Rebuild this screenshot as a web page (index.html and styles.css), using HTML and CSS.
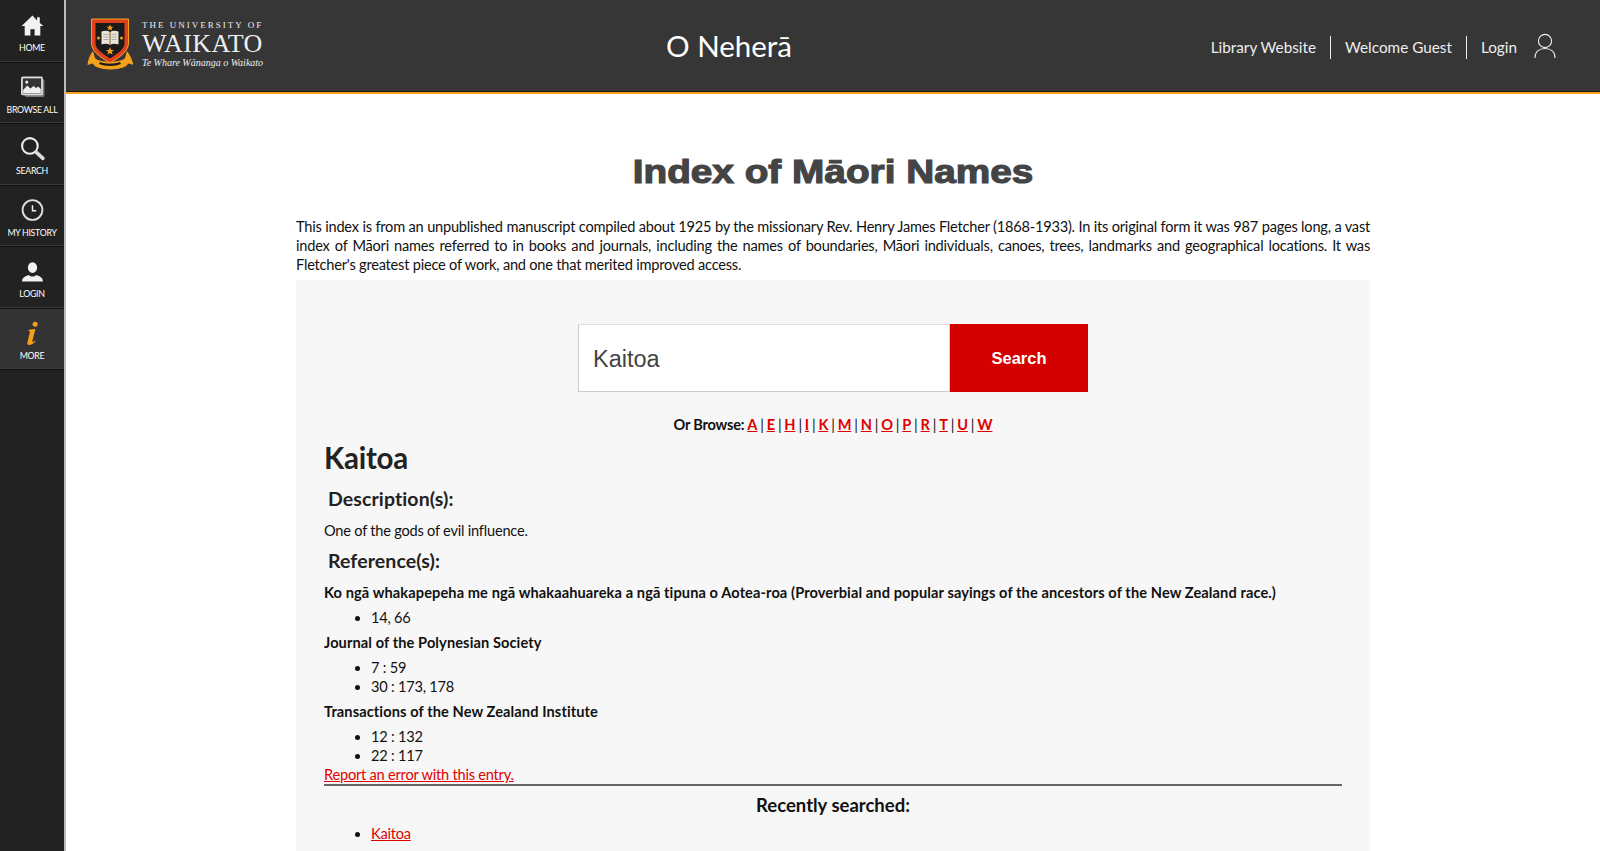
FILE: index.html
```html
<!DOCTYPE html>
<html lang="en">
<head>
  <meta charset="UTF-8">
  <meta name="viewport" content="width=device-width, initial-scale=1.0">
  <title>Index of Māori Names</title>
  <link rel="stylesheet" href="styles.css">
</head>
<body>
  <div class="app">
    <nav class="sidebar">
      <a class="side-item" href="#">
        <svg class="side-icon" viewBox="0 0 24 24"><path fill="#f2f2f2" d="M12 2.500 1.500 12.500h3v9h5.500v-6h4v6h5.500v-9h3L19 9.600V4h-2.600v3.100z"/></svg>
        <span>HOME</span>
      </a>
      <a class="side-item" href="#">
        <svg class="side-icon" viewBox="0 0 24 24"><rect x="4.500" y="4" width="19" height="17" rx="1.500" fill="#777"/><rect x="1" y="1.500" width="21" height="18" rx="1.500" fill="#ddd"/><rect x="2.700" y="3.200" width="17.600" height="14.600" fill="#333"/><path fill="#eee" d="M3 17.500v-3l4-4.500 3 3 3-2.500 2.500 2 2-1.500 2.500 2.500v4z"/><circle cx="6.500" cy="6.800" r="1.500" fill="#eee"/></svg>
        <span>BROWSE ALL</span>
      </a>
      <a class="side-item" href="#">
        <svg class="side-icon" viewBox="0 0 24 24"><circle cx="9.500" cy="9.500" r="7.500" fill="none" stroke="#eee" stroke-width="2"/><path stroke="#ddd" stroke-width="3.400" stroke-linecap="round" d="m16 16 6 5.500"/></svg>
        <span>SEARCH</span>
      </a>
      <a class="side-item" href="#">
        <svg class="side-icon" viewBox="0 0 24 24"><circle cx="12" cy="11.500" r="9.500" fill="none" stroke="#ddd" stroke-width="1.800"/><path fill="none" stroke="#eee" stroke-width="1.400" d="M12 7v5.300h3.600"/></svg>
        <span>MY HISTORY</span>
      </a>
      <a class="side-item" href="#">
        <svg class="side-icon" viewBox="0 0 24 24"><ellipse cx="12" cy="8.200" rx="4.400" ry="5.200" fill="#f2f2f2"/><path fill="#f2f2f2" d="M2 21.500c0-4 3-5 6.500-6.200 2 2 5 2 7 0 3.500 1.200 6.500 2.200 6.500 6.200z"/></svg>
        <span>LOGIN</span>
      </a>
      <a class="side-item active" href="#">
        <svg class="side-icon" viewBox="0 0 24 24"><circle cx="14.500" cy="3" r="2.400" fill="#f5a11c"/><path fill="#f5a11c" d="M8.500 8.500 14.800 7.600 11.800 19.500c-.2.900.5 1 2.700-.8l.5.600c-2.300 3-4.300 3.700-6.200 3.700-1.500 0-2-1-1.600-2.500l2.300-9.700c.2-1-.3-1.100-1.700-1.100z"/></svg>
        <span>MORE</span>
      </a>
    </nav>

    <div class="page">
      <header class="topbar">
        <a class="logo" href="#">
          <svg class="crest" viewBox="0 0 46 54">
            <path fill="#f5a11c" d="M6 33c-3 4-5 8-5.500 14l5-1.500 3 3c8 4 22 4 30 0l3-3 5 1.500C45 41 43 37 40 33l-2 7c-4 5-26 5-30 0z"/>
            <path fill="#1b1b1b" d="M12 46c6 2.500 16 2.500 22 0l-1-2c-6 2-14 2-20 0z"/>
            <path fill="#e0401c" stroke="#f5a11c" d="M4.500 1h37v24c0 8-8 14-18.500 20C12.500 39 4.500 33 4.500 25z"/>
            <path fill="#1b1b1b" d="M8.500 5h29v20c0 6-6 10-14.500 15.500C14.500 35 8.500 31 8.500 25z"/>
            <path fill="#e9e4d6" d="M14.500 13.500c3-1 6-1 8.500.5 2.500-1.500 5.500-1.500 8.500-.5v13c-3-1-6-1-8.500.5-2.500-1.500-5.500-1.500-8.500-.5z"/>
            <path fill="none" stroke="#9a9a9a" stroke-width=".7" d="M16.500 16.500h5M16.500 19h5M16.500 21.500h5M24.500 16.500h5M24.500 19h5M24.500 21.500h5"/>
            <path stroke="#8a5a2b" d="M23 14v13"/>
            <path fill="#f5a11c" d="m23 6.500 1 2.300h2.400l-1.900 1.500.7 2.300-2.200-1.400-2.200 1.400.7-2.300-1.900-1.500H22zM23 29l1.200 3h3l-2.400 1.800.9 3-2.700-1.800-2.700 1.800.9-3-2.400-1.800h3z"/>
            <circle cx="11.500" cy="20" r="1.500" fill="#f5a11c"/>
            <circle cx="34.500" cy="20" r="1.500" fill="#f5a11c"/>
          </svg>
          <span class="logo-text">
            <span class="logo-top">THE UNIVERSITY OF</span>
            <span class="logo-name">WAIKATO</span>
            <span class="logo-sub">Te Whare Wānanga o Waikato</span>
          </span>
        </a>
        <div class="site-title">O Neherā</div>
        <div class="top-links">
          <a href="#">Library Website</a>
          <a href="#">Welcome Guest</a>
          <a href="#">Login</a>
          <svg class="user-icon" viewBox="0 0 24 26"><circle cx="12" cy="8" r="6.600" fill="none" stroke="#eee" stroke-width="1.100"/><path fill="none" stroke="#eee" stroke-width="1.100" d="M2 25c0-6 4-9.500 10-9.500S22 19 22 25"/></svg>
        </div>
      </header>

      <main class="content">
        <h1 class="page-title">Index of Māori Names</h1>
        <p class="intro">This index is from an unpublished manuscript compiled about 1925 by the missionary Rev. Henry James Fletcher (1868-1933). In its original form it was 987 pages long, a vast index of Māori names referred to in books and journals, including the names of boundaries, Māori individuals, canoes, trees, landmarks and geographical locations. It was Fletcher's greatest piece of work, and one that merited improved access.</p>

        <section class="panel">
          <form class="search-form">
            <input class="search-input" type="text" value="Kaitoa">
            <button class="search-btn" type="button">Search</button>
          </form>
          <p class="browse">
            <b>Or Browse:</b>
            <a href="#">A</a> | <a href="#">E</a> | <a href="#">H</a> | <a href="#">I</a> | <a href="#">K</a> | <a href="#">M</a> | <a href="#">N</a> | <a href="#">O</a> | <a href="#">P</a> | <a href="#">R</a> | <a href="#">T</a> | <a href="#">U</a> | <a href="#">W</a>
          </p>

          <h2 class="entry-name">Kaitoa</h2>
          <h3 class="entry-head">Description(s):</h3>
          <p class="entry-text">One of the gods of evil influence.</p>
          <h3 class="entry-head">Reference(s):</h3>
          <p class="ref-title">Ko ngā whakapepeha me ngā whakaahuareka a ngā tipuna o Aotea-roa (Proverbial and popular sayings of the ancestors of the New Zealand race.)</p>
          <ul class="ref-list">
            <li>14, 66</li>
          </ul>
          <p class="ref-title">Journal of the Polynesian Society</p>
          <ul class="ref-list">
            <li>7 : 59</li>
            <li>30 : 173, 178</li>
          </ul>
          <p class="ref-title">Transactions of the New Zealand Institute</p>
          <ul class="ref-list last">
            <li>12 : 132</li>
            <li>22 : 117</li>
          </ul>
          <a class="report" href="#">Report an error with this entry.</a>
          <hr class="divider">
          <h4 class="recent-head">Recently searched:</h4>
          <ul class="ref-list recent-list">
            <li><a href="#">Kaitoa</a></li>
          </ul>
        </section>
      </main>
    </div>
  </div>
</body>
</html>
```

FILE: styles.css
```css
* {
  box-sizing: border-box;
}

html, body {
  height: 100%;
  margin: 0;
  overflow: hidden;
}

body {
  font-family: Lato, Arial, sans-serif;
  font-size: 14.6px;
  line-height: 19px;
  letter-spacing: -0.22px;
  color: #111;
  background: #fff;
}

a {
  color: #e00000;
}

.app {
  display: flex;
  height: 100vh;
}

/* left nav */
.sidebar {
  width: 66px;
  flex: none;
  padding-top: 1px;
  background: #222;
  border-right: 2px solid #bbb;
}

.side-item {
  height: 61.5px;
  display: flex;
  flex-direction: column;
  align-items: center;
  padding-top: 12px;
  background: #222;
  border-bottom: 1px solid #111;
  box-shadow: inset 0 -1px 0 #3a3a3a;
  color: #fff;
  text-decoration: none;
  font-size: 8.800px;
  line-height: 12px;
  letter-spacing: -0.3px;
}

.side-item.active {
  background: #333;
}

.side-icon {
  width: 25px;
  height: 25px;
  margin-bottom: 4px;
}

.page {
  flex: 1;
  min-width: 0;
}

/* header */
.topbar {
  height: 94px;
  display: flex;
  align-items: center;
  position: relative;
  padding: 0 43px 3px 21px;
  background: #363636;
  border-bottom: 2px solid #f5a11c;
  box-shadow: inset 0 -1px 0 #1a1a1a;
  color: #fff;
  letter-spacing: 0;
}

.logo {
  display: flex;
  align-items: center;
  gap: 9px;
  color: #eee;
  text-decoration: none;
}

.crest {
  width: 46px;
  height: 54px;
}

.logo-text {
  display: flex;
  flex-direction: column;
  font-family: "Liberation Serif", serif;
}

.logo-top {
  font-size: 9px;
  line-height: 11px;
  letter-spacing: 2px;
}

.logo-name {
  font-size: 26px;
  line-height: 25px;
  letter-spacing: 0.4px;
}

.logo-sub {
  font-size: 10px;
  line-height: 13px;
  font-style: italic;
}

.site-title {
  position: absolute;
  left: 600px;
  top: 27px;
  font-size: 29.500px;
  line-height: 38px;
}

.top-links {
  margin-left: auto;
  margin-top: 6px;
  display: flex;
  align-items: center;
  font-size: 15.300px;
}

.top-links a {
  padding: 2px 14px;
  color: #eee;
  text-decoration: none;
  border-right: 1px solid #eee;
}

.top-links a:nth-child(3) {
  border-right: 0;
  padding-right: 16px;
}

.user-icon {
  width: 24px;
  height: 26px;
  margin-top: -4px;
}

/* main column */
.content {
  width: 1074px;
  margin-left: 230px;
}

.page-title {
  margin: 57px 0 26px;
  text-align: center;
  font-family: "Liberation Sans", Arial, sans-serif;
  font-size: 34px;
  line-height: 40px;
  letter-spacing: 0;
  color: #444;
  -webkit-text-stroke: 1.200px #444;
  transform: scaleX(1.140);
}

.intro {
  margin: 0 0 6px;
  text-align: justify;
}

.panel {
  background: #f7f7f7;
  padding: 44px 28px 40px;
}

.search-form {
  display: flex;
  width: 510px;
  height: 68px;
  margin: 0 auto 23px;
}

.search-input {
  flex: 1;
  min-width: 0;
  padding: 2px 14px 0;
  border: 1px solid #ccc;
  border-top-color: #ddd;
  background: #fff;
  font-family: "Liberation Sans", Arial, sans-serif;
  font-size: 23.500px;
  color: #444;
}

.search-btn {
  width: 138px;
  border: 0;
  background: #d40000;
  color: #fff;
  font-family: "Liberation Sans", Arial, sans-serif;
  font-size: 16.500px;
  font-weight: 700;
}

.browse {
  margin: 0 0 6px;
  text-align: center;
  word-spacing: -0.5px;
}

.browse b {
  word-spacing: 0;
}

.browse a {
  font-weight: 700;
}

.entry-name {
  margin: 0 0 11px;
  font-size: 29.500px;
  line-height: 36px;
  color: #222;
}

.entry-head {
  margin: 0 0 11px 4px;
  font-size: 19.500px;
  line-height: 23px;
  letter-spacing: 0.1px;
  color: #222;
}

.entry-text {
  margin: 0 0 9px;
}

.ref-title {
  margin: 0 0 6px;
  font-weight: 700;
  letter-spacing: 0.1px;
}

.ref-list {
  margin: 0 0 6px;
  padding-left: 47px;
}

.ref-list.last {
  margin-bottom: 0;
}

.report {
  display: block;
  height: 19px;
}

.divider {
  margin: 0 0 7px;
  border: 0;
  border-top: 2px solid #666;
}

.recent-head {
  margin: 0 0 7px;
  text-align: center;
  font-size: 18.500px;
  line-height: 24px;
  letter-spacing: 0;
}
```
